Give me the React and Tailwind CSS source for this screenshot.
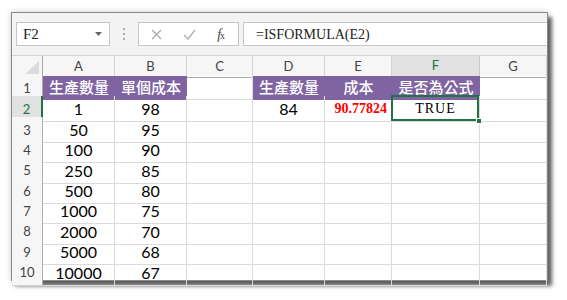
import React from "react";

const cols = ["A", "B", "C", "D", "E", "F", "G"];

const rows = [
  ["1", "98", "", "84", "90.77824", "TRUE", ""],
  ["50", "95"],
  ["100", "90"],
  ["250", "85"],
  ["500", "80"],
  ["1000", "75"],
  ["2000", "70"],
  ["5000", "68"],
  ["10000", "67"],
];

const headRow = ["生產數量", "單個成本", "", "生產數量", "成本", "是否為公式", ""];

const gridCols = "grid grid-cols-[31px_72px_72px_66px_72px_67px_88px_67px]";

const cellFont = { fontFamily: "Lato, 'Noto Sans CJK TC', sans-serif" };
const serifFont = { fontFamily: "'Liberation Serif', 'Noto Sans CJK TC', serif" };

function DataCell({ value, col }) {
  if (col === 4 && value) {
    return (
      <div className="flex items-center justify-end pr-[4px] border-r border-b border-[#dadada] text-[14px] font-bold text-[#ff0000]" style={serifFont}>
        {value}
      </div>
    );
  }
  if (col === 5 && value) {
    return (
      <div className="relative flex items-center justify-center border-r border-b border-[#dadada] text-[14px] text-black tracking-[1px]" style={serifFont}>
        {value}
        <span className="absolute -left-[1px] -top-[1px] right-0 bottom-0 border-2 border-[#217346]" />
        <span className="absolute -right-[3px] -bottom-[3px] w-[6px] h-[6px] bg-[#217346] border border-white" />
      </div>
    );
  }
  return (
    <div className="flex items-center justify-center pt-[1px] border-r border-b border-[#dadada] text-[16px] text-black" style={cellFont}>
      {value}
    </div>
  );
}

export default function App() {
  return (
    <div className="w-[567px] h-[300px] bg-white pt-[12px] pl-[11px]">
      <div className="w-[537px] border border-[#8a8a8a] bg-white shadow-[4px_5px_4px_rgba(0,0,0,0.6),0_0_6px_rgba(0,0,0,0.2)]">
        {/* formula bar */}
        <div className="h-[43px] bg-[#f3f3f3] flex items-center pl-[4px] border-b border-[#d4d4d4]">
          <div className="w-[94px] h-[24px] bg-white border border-[#c6c6c6] flex items-center justify-between pl-[6px] pr-[7px]">
            <span className="text-[15px] text-[#222]" style={serifFont}>F2</span>
            <svg width="7" height="4" viewBox="0 0 7 4"><path d="M0 0h7L3.5 4z" fill="#666" /></svg>
          </div>
          <div className="w-[28px] flex flex-col items-center gap-[3px]">
            <span className="w-[2px] h-[2px] bg-[#a8a8a8]" />
            <span className="w-[2px] h-[2px] bg-[#a8a8a8]" />
            <span className="w-[2px] h-[2px] bg-[#a8a8a8]" />
          </div>
          <div className="w-[101px] h-[24px] bg-white border border-[#c6c6c6] flex items-center">
            <div className="w-[36px] flex justify-center">
              <svg width="11" height="11" viewBox="0 0 11 11"><path d="M1 1l9 9M10 1l-9 9" stroke="#a6a6a6" strokeWidth="1.2" /></svg>
            </div>
            <div className="w-[30px] flex justify-center">
              <svg width="13" height="11" viewBox="0 0 13 11"><path d="M1 6l4 4 7-9" stroke="#b4b4b4" strokeWidth="1.5" fill="none" /></svg>
            </div>
            <div className="w-[34px] flex justify-center text-[#444] italic text-[14px]" style={serifFont}>
              f<span className="text-[10px] not-italic -ml-[1px] mt-[4px]">x</span>
            </div>
          </div>
          <div className="flex-1 ml-[4px] h-[24px] bg-white border-t border-b border-l border-[#c6c6c6] flex items-center pl-[12px] text-[14px] text-[#222]" style={serifFont}>
            =ISFORMULA(E2)
          </div>
        </div>

        {/* column headers */}
        <div className={`${gridCols} h-[20px] bg-[#f6f6f6]`} style={cellFont}>
          <div className="flex items-end justify-end pr-[3px] pb-[3px] border-r border-b border-[#ababab]">
            <svg width="14" height="13" viewBox="0 0 14 13"><path d="M14 0v13H0z" fill="#dcdcdc" /></svg>
          </div>
          {cols.map((c) =>
            c === "F" ? (
              <div key={c} className="flex items-center justify-center bg-[#e1e1e1] border-r border-[#c6c6c6] border-b-2 border-b-[#217346] text-[13px] text-[#217346]">
                {c}
              </div>
            ) : (
              <div key={c} className="flex items-center justify-center border-r border-[#d4d4d4] border-b border-b-[#ababab] text-[13px] text-[#444]">
                {c}
              </div>
            )
          )}
        </div>

        {/* row 1 */}
        <div className={`${gridCols} h-[20.4px]`}>
          <div className="flex items-center justify-center pt-[2px] bg-[#f6f6f6] border-r border-r-[#ababab] border-b border-[#d4d4d4] text-[13px] text-[#444]" style={cellFont}>
            1
          </div>
          {headRow.map((t, i) =>
            i === 2 || i === 6 ? (
              <div key={i} className="border-r border-b border-[#dadada]" />
            ) : (
              <div key={i} className="flex items-center justify-center bg-[#8064a2] border-b border-[#8064a2] text-[15px] font-medium text-white" style={{ fontFamily: "'Noto Sans CJK TC', sans-serif" }}>
                {t}
              </div>
            )
          )}
        </div>

        {/* data rows */}
        {rows.map((r, ri) => (
          <div key={ri} className={`${gridCols} h-[20.4px]`}>
            {ri === 0 ? (
              <div className="flex items-center justify-center pt-[2px] bg-[#e1e1e1] border-r-2 border-r-[#217346] border-b border-[#d4d4d4] text-[13px] text-[#217346]" style={cellFont}>
                2
              </div>
            ) : (
              <div className="flex items-center justify-center pt-[2px] bg-[#f6f6f6] border-r border-r-[#ababab] border-b border-[#d4d4d4] text-[13px] text-[#444]" style={cellFont}>
                {ri + 2}
              </div>
            )}
            {cols.map((c, ci) => (
              <DataCell key={c} value={r[ci] || ""} col={ci} />
            ))}
          </div>
        ))}
      </div>
    </div>
  );
}
